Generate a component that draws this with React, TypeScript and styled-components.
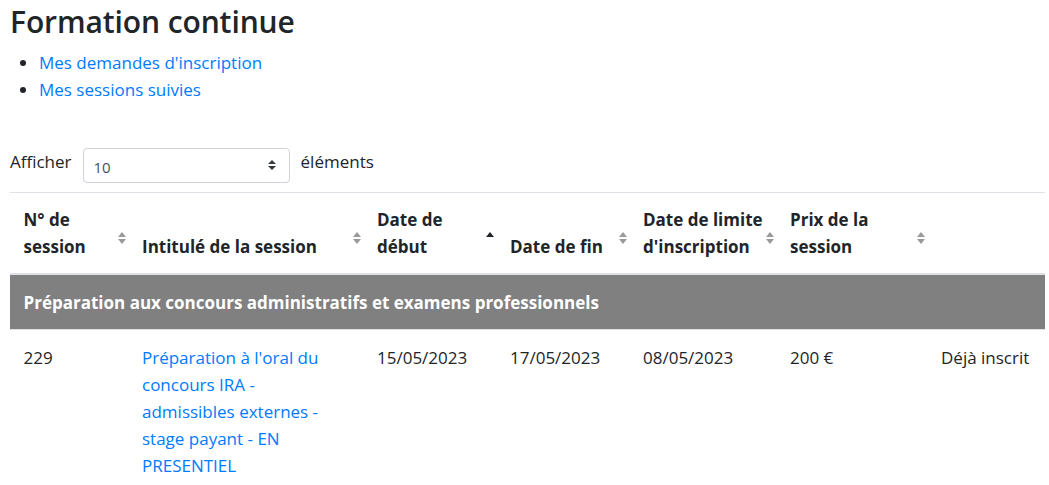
import React from 'react';
import styled, {createGlobalStyle} from 'styled-components';

const GlobalStyle = createGlobalStyle`
  html, body {
    margin: 0;
    padding: 0;
    background: #fff;
  }
  body {
    font-family: "Open Sans", "Noto Sans", sans-serif;
    font-size: 17px;
    line-height: 27px;
    color: #212529;
  }
`;

const Page = styled.div`
  width: 1035px;
  padding: 1px 0 0 10px;
`;

const Title = styled.h1`
  margin: 0 0 7px;
  font-size: 30px;
  line-height: 41px;
  font-weight: 600;
  letter-spacing: -0.1px;
`;

const Links = styled.ul`
  margin: 0;
  padding-left: 29px;
`;

const Link = styled.a`
  color: #007bff;
  text-decoration: none;
`;

const LengthRow = styled.div`
  display: flex;
  align-items: flex-start;
  gap: 11px;
  margin-top: 45px;
`;

const SelectWrap = styled.div`
  position: relative;
  width: 207px;
  height: 35px;
`;

const Select = styled.select`
  appearance: none;
  width: 100%;
  height: 100%;
  margin: 0;
  padding: 2px 28px 0 10px;
  border: 1px solid #ced4da;
  border-radius: 4px;
  background: #fff;
  font-family: inherit;
  font-size: 15px;
  color: #495057;
`;

const SelectArrow = styled.svg`
  position: absolute;
  right: 14px;
  top: 12px;
  pointer-events: none;
`;

const Table = styled.table`
  margin-top: 9px;
  width: 1035px;
  border-collapse: collapse;
  table-layout: fixed;
  border-top: 1px solid #dee2e6;
`;

const Th = styled.th`
  position: relative;
  padding: 12.5px 13.5px 13.5px;
  text-align: left;
  vertical-align: bottom;
  font-weight: 700;
  white-space: nowrap;
  border-bottom: 2px solid #dee2e6;
`;

const SortIcon = styled.svg`
  position: absolute;
  right: 3px;
  top: calc(50% - 1px);
`;

const GroupCell = styled.td`
  padding: 13.5px;
  background: #808080;
  color: #fff;
  font-weight: 700;
  border-bottom: 1px solid #dee2e6;
`;

const Td = styled.td`
  padding: 13.5px;
  vertical-align: top;
`;

type SortState = 'none' | 'asc';

const Sort = ({state}: {state: SortState}) => (
  <SortIcon width="8" height="12" viewBox="0 0 8 12">
    <polygon
      points="0,5 4,0 8,5"
      fill={state === 'asc' ? '#212529' : '#9a9a9a'}
    />
    <polygon
      points="0,7 4,12 8,7"
      fill={state === 'asc' ? 'transparent' : '#9a9a9a'}
    />
  </SortIcon>
);

const columns: {label: React.ReactNode; width: number; sort?: SortState}[] = [
  {label: <>N° de<br/>session</>, width: 118.5, sort: 'none'},
  {label: 'Intitulé de la session', width: 235, sort: 'none'},
  {label: <>Date de<br/>début</>, width: 133, sort: 'asc'},
  {label: 'Date de fin', width: 133, sort: 'none'},
  {label: <>Date de limite<br/>d'inscription</>, width: 147, sort: 'none'},
  {label: <>Prix de la<br/>session</>, width: 151, sort: 'none'},
  {label: '', width: 117.5},
];

export default function App() {
  return (
    <Page>
      <GlobalStyle/>
      <Title>Formation continue</Title>
      <Links>
        <li><Link href="#">Mes demandes d'inscription</Link></li>
        <li><Link href="#">Mes sessions suivies</Link></li>
      </Links>

      <LengthRow>
        <span>Afficher</span>
        <SelectWrap>
          <Select defaultValue="10">
            <option value="10">10</option>
            <option value="25">25</option>
            <option value="50">50</option>
            <option value="100">100</option>
          </Select>
          <SelectArrow width="8" height="10" viewBox="0 0 4 5">
            <path d="M2 0L0 2h4zm0 5L0 3h4z" fill="#343a40"/>
          </SelectArrow>
        </SelectWrap>
        <span>éléments</span>
      </LengthRow>

      <Table>
        <colgroup>
          {columns.map((c, i) => <col key={i} style={{width: c.width}}/>)}
        </colgroup>
        <thead>
          <tr>
            {columns.map((c, i) => (
              <Th key={i}>
                {c.label}
                {c.sort && <Sort state={c.sort}/>}
              </Th>
            ))}
          </tr>
        </thead>
        <tbody>
          <tr>
            <GroupCell colSpan={7}>
              Préparation aux concours administratifs et examens professionnels
            </GroupCell>
          </tr>
          <tr>
            <Td>229</Td>
            <Td>
              <Link href="#">
                Préparation à l'oral du concours IRA - admissibles externes - stage payant - EN PRESENTIEL
              </Link>
            </Td>
            <Td>15/05/2023</Td>
            <Td>17/05/2023</Td>
            <Td>08/05/2023</Td>
            <Td>200 €</Td>
            <Td>Déjà inscrit</Td>
          </tr>
        </tbody>
      </Table>
    </Page>
  );
}
